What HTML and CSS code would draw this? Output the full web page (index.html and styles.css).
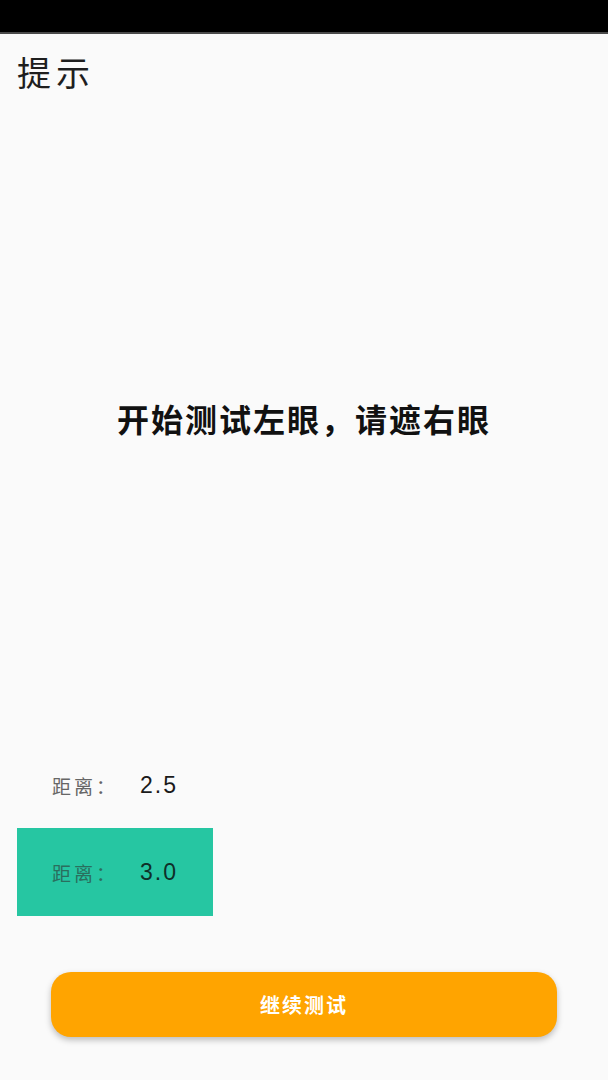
FILE: index.html
```html
<!DOCTYPE html>
<html>
<head>
  <meta charset="UTF-8">
  <title>提示</title>
  <link rel="stylesheet" href="styles.css">
</head>

<body>
  <div class="status-bar"></div>

  <div class="title">提示</div>

  <div class="prompt">
    <p class="prompt-text">开始测试左眼，请遮右眼</p>
  </div>

  <!-- distance rows, the selected one gets a green box -->
  <div class="distances">
    <div class="dist-row">
      <span class="dist-label">距离：</span>
      <span class="dist-value">2.5</span>
    </div>
    <div class="dist-row selected">
      <span class="dist-label">距离：</span>
      <span class="dist-value">3.0</span>
    </div>
  </div>

  <div class="footer">
    <div class="btn-next">继续测试</div>
  </div>
</body>
</html>
```

FILE: styles.css
```css
/* page */
body {
  margin: 0;
  width: 608px;
  height: 1080px;
  background: #fafafa;
  font-family: "Noto Sans CJK SC", "Noto Sans", sans-serif;
  color: #111;
  overflow: hidden;
}

.status-bar {
  height: 32px;
  background: #000;
  border-bottom: 2px solid #4a4a4a;
}

/* header title */
.title {
  height: 66px;
  box-sizing: border-box;
  padding: 16px 0 0 17px;
  font-size: 34px;
  line-height: 44px;
  letter-spacing: 5px;
  color: #1e1e1e;
}

/* centered hint */
.prompt {
  height: 636px;
  display: flex;
  align-items: center;
  justify-content: center;
}
.prompt-text {
  margin: 0;
  font-size: 32px;
  font-weight: bold;
  letter-spacing: 2px;
  color: #111;
}

/* distance list */
.distances {
  padding-top: 27px;
}
.dist-row {
  display: flex;
  align-items: center;
  height: 44px;
  padding-left: 52px;
}
.dist-row.selected {
  margin: 21px 0 0 17px;
  width: 196px;
  height: 88px;
  box-sizing: border-box;
  padding-left: 35px;
  background: #26c6a2;
}
.dist-label {
  width: 88px;
  font-size: 19px;
  letter-spacing: 3px;
  color: #666;
}
.selected .dist-label {
  color: #2a6f5e;
}
.dist-value {
  font-family: "Liberation Sans", Arial, sans-serif;
  font-size: 23px;
  letter-spacing: 2px;
  color: #1a1a1a;
}
.selected .dist-value {
  color: #0f2f28;
}

/* bottom button */
.footer {
  padding: 56px 51px 0 51px;
}
.btn-next {
  height: 65px;
  border-radius: 20px;
  background: #ffa400;
  box-shadow: 0 3px 6px rgba(0, 0, 0, 0.25);
  display: flex;
  align-items: center;
  justify-content: center;
  color: #fff;
  font-size: 20px;
  font-weight: bold;
  letter-spacing: 2px;
}
```
